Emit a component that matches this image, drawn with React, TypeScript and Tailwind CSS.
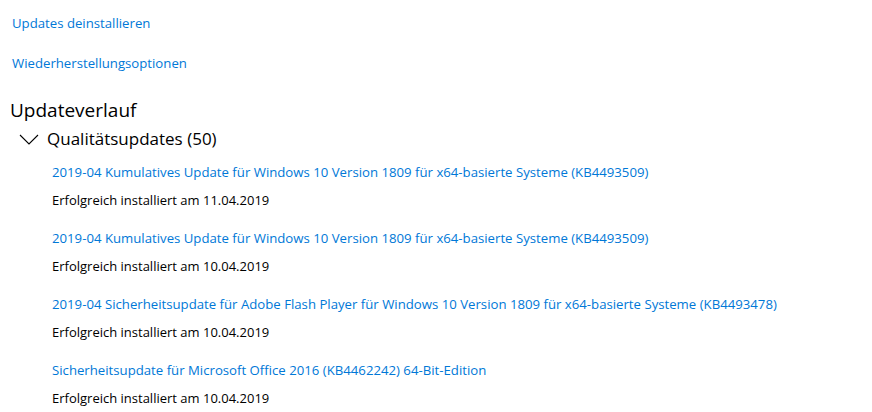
const updates = [
  {
    title: "2019-04 Kumulatives Update für Windows 10 Version 1809 für x64-basierte Systeme (KB4493509)",
    date: "11.04.2019",
  },
  {
    title: "2019-04 Kumulatives Update für Windows 10 Version 1809 für x64-basierte Systeme (KB4493509)",
    date: "10.04.2019",
  },
  {
    title: "2019-04 Sicherheitsupdate für Adobe Flash Player für Windows 10 Version 1809 für x64-basierte Systeme (KB4493478)",
    date: "10.04.2019",
  },
  {
    title: "Sicherheitsupdate für Microsoft Office 2016 (KB4462242) 64-Bit-Edition",
    date: "10.04.2019",
  },
];

function Chevron() {
  return (
    <svg width="20" height="11" viewBox="0 0 20 11" fill="none" className="block">
      <path d="M1 1 L10 10 L19 1" stroke="#000" strokeWidth="1.1" />
    </svg>
  );
}

export default function App() {
  return (
    <div className="h-[412px] w-[872px] overflow-hidden bg-white font-['Open_Sans',sans-serif] text-black">
      <div className="pl-[12px] pt-[13px]">
        <a className="block text-[13.2px] leading-[20px] text-[#0078d7]">Updates deinstallieren</a>
        <a className="mt-[20px] block text-[13.2px] leading-[20px] text-[#0078d7]">Wiederherstellungsoptionen</a>
      </div>
      <div className="mt-[24px] pl-[10px] text-[19px] leading-[26px]">Updateverlauf</div>
      <div className="mt-[4px] flex items-center gap-[8px] pl-[19px] text-[17px] leading-[24px]">
        <Chevron />
        <span>Qualitätsupdates (50)</span>
      </div>
      <div className="flex flex-col gap-[18px] pl-[52px] pt-[11px]">
        {updates.map((u, i) => (
          <div key={i} className="flex flex-col gap-[8px]">
            <a className="block text-[13.2px] leading-[20px] text-[#0078d7]">{u.title}</a>
            <div className="text-[13px] leading-[20px]">Erfolgreich installiert am {u.date}</div>
          </div>
        ))}
      </div>
    </div>
  );
}
